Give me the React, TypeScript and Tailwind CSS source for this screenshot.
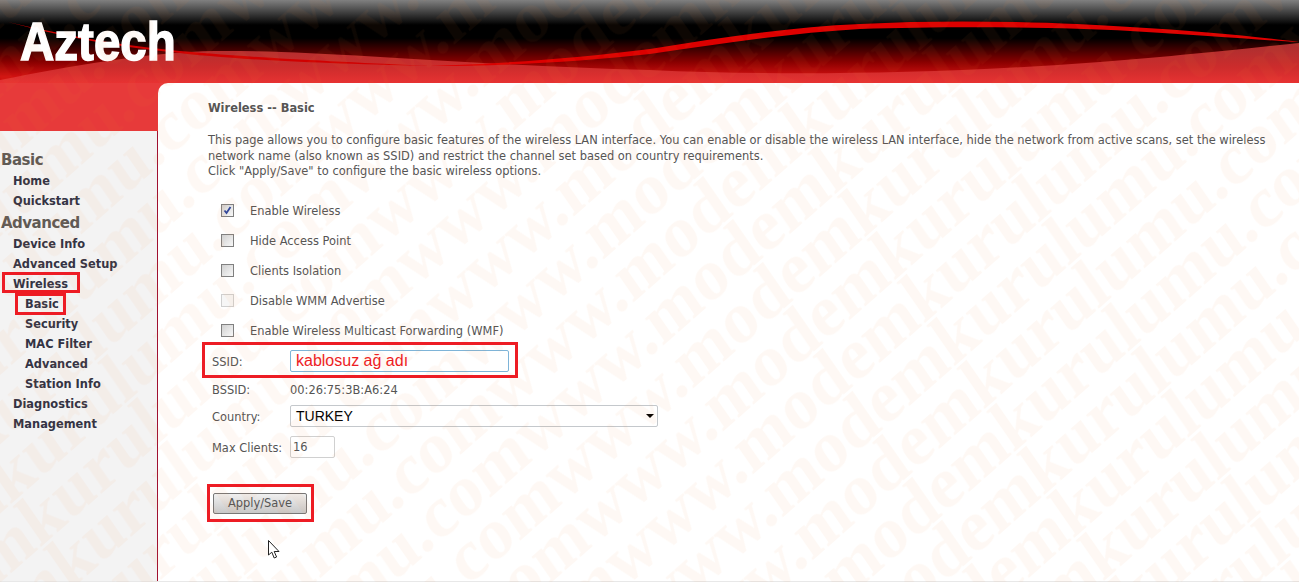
import React from 'react';

const Watermark: React.FC = () => (
  <svg width="1299" height="582" className="absolute inset-0 pointer-events-none">
    <defs>
      <pattern
        id="wm"
        patternUnits="userSpaceOnUse"
        width="860"
        height="52.4"
        patternTransform="matrix(0.75 -0.66 0.57 0.82 773 365) translate(-252 17)"
      >
        <text x="0" y="0" fontFamily="'Liberation Serif', serif" fontWeight="700" fontSize="72" textLength="860" fill="#f08030">www.modemkurulumu.com</text>
        <text x="0" y="52.4" fontFamily="'Liberation Serif', serif" fontWeight="700" fontSize="72" textLength="860" fill="#f08030">www.modemkurulumu.com</text>
      </pattern>
    </defs>
    <rect width="1299" height="582" fill="url(#wm)" opacity="0.055" />
  </svg>
);

const Header: React.FC = () => (
  <div className="relative h-[83px] shrink-0 overflow-hidden bg-[linear-gradient(#808080_0%,#000_30%,#000_46%,#8a0000_75%,#d01010_92%,#d01010_100%)]">
    <svg width="1299" height="83" viewBox="0 0 1299 83" className="absolute inset-0">
      <defs>
        <linearGradient id="band" x1="0" y1="43" x2="0" y2="83" gradientUnits="userSpaceOnUse">
          <stop offset="0" stopColor="#a83030" />
          <stop offset="0.6" stopColor="#cc2c2c" />
          <stop offset="1" stopColor="#e73232" />
        </linearGradient>
      </defs>
      <path d="M0 80 C 70 66 150 52 215 51 C 320 50 480 66 650 70 C 780 76 940 74 1100 62 C 1180 56 1250 48 1299 43 L1299 83 L0 83 Z" fill="url(#band)" />
      <path d="M8 22 C 60 34 110 44 170 50 C 230 56 300 60 430 66 C 300 63 230 59 170 52 C 110 46 60 36 8 22 Z" fill="#d00000" />
      <path d="M430 66 C 500 64 580 58 650 49 C 720 38 790 27 860 24 C 950 19 1060 22 1130 27 C 1200 31 1260 37 1299 42 C 1260 40 1200 35 1130 31 C 1060 27 950 26 860 29 C 790 33 720 44 650 54 C 580 62 500 66 430 66 Z" fill="#dc0000" />
    </svg>
    <span className="absolute left-[20px] top-[10px] font-['Liberation_Sans',sans-serif] font-bold text-[54px] leading-[62px] text-white [-webkit-text-stroke:1.5px_white] scale-x-[0.88] origin-left">Aztech</span>
  </div>
);

const navItems = [
  { label: 'Basic', kind: 'head' },
  { label: 'Home', kind: 'item' },
  { label: 'Quickstart', kind: 'item' },
  { label: 'Advanced', kind: 'head' },
  { label: 'Device Info', kind: 'item' },
  { label: 'Advanced Setup', kind: 'item' },
  { label: 'Wireless', kind: 'item' },
  { label: 'Basic', kind: 'sub' },
  { label: 'Security', kind: 'sub' },
  { label: 'MAC Filter', kind: 'sub' },
  { label: 'Advanced', kind: 'sub' },
  { label: 'Station Info', kind: 'sub' },
  { label: 'Diagnostics', kind: 'item' },
  { label: 'Management', kind: 'item' },
];

const Sidebar: React.FC = () => (
  <div className="w-[158px] shrink-0 flex flex-col">
    <div className="h-[48px] bg-[#e73a3a]" />
    <div className="flex-1 bg-[#f3f3f3] border-r border-[#a01030] pt-[18px] font-['DejaVu_Sans',sans-serif] font-bold">
      {navItems.map((n, i) =>
        n.kind === 'head' ? (
          <div key={i} className="h-[23px] pl-px flex items-center text-[15px] tracking-[-0.5px] text-[#5f5a55]">{n.label}</div>
        ) : (
          <div key={i} className={`h-[20px] flex items-center text-[11.4px] text-[#333344] ${n.kind === 'sub' ? 'pl-[25px]' : 'pl-[13px]'}`}>{n.label}</div>
        )
      )}
    </div>
  </div>
);

const checks = [
  { label: 'Enable Wireless', on: true },
  { label: 'Hide Access Point' },
  { label: 'Clients Isolation' },
  { label: 'Disable WMM Advertise', off: true },
  { label: 'Enable Wireless Multicast Forwarding (WMF)' },
];

const Box: React.FC<{ on?: boolean; off?: boolean }> = ({ on, off }) => (
  <span className={`w-[13px] h-[13px] mb-[3px] border flex items-center justify-center ${off ? 'border-[#d0d0d0] bg-[#f6f6f6]' : 'border-[#808080] bg-gradient-to-br from-[#d0d0d0] to-[#f8f8f8]'}`}>
    {on && (
      <svg width="9" height="9" viewBox="0 0 9 9"><path d="M1.5 4.5 L3.5 7 L7.5 1" stroke="#33479a" strokeWidth="1.8" fill="none" /></svg>
    )}
  </span>
);

const Content: React.FC = () => (
  <div className="flex-1 bg-white rounded-tl-[10px] pl-[50px] pt-[18px] text-[11.44px] text-[#555] font-['DejaVu_Sans',sans-serif]">
    <h1 className="font-bold leading-[15px] text-[#555]">Wireless -- Basic</h1>
    <p className="mt-[17px] leading-[15.6px] w-[1075px]">
      This page allows you to configure basic features of the wireless LAN interface. You can enable or disable the wireless LAN interface, hide the network from active scans, set the wireless network name (also known as SSID) and restrict the channel set based on country requirements.<br />
      Click "Apply/Save" to configure the basic wireless options.
    </p>
    <div className="mt-[17px] pl-[13px]">
      {checks.map((c) => (
        <div key={c.label} className="h-[30px] flex items-center gap-[16px]">
          <Box on={c.on} off={c.off} />
          <span>{c.label}</span>
        </div>
      ))}
    </div>
    <div className="-mt-px pl-[4px] flex flex-col">
      <div className="h-[30px] flex items-center">
        <span className="w-[78px] pt-[3px]">SSID:</span>
        <span className="w-[219px] h-[22px] border border-[#7eb4d8] rounded-[2px] pl-[5px] flex items-center font-['Liberation_Sans',sans-serif] text-[16px] text-[#ed1c24]">kablosuz ağ adı</span>
      </div>
      <div className="h-[25px] pt-[4px] flex items-center">
        <span className="w-[78px]">BSSID:</span>
        <span>00:26:75:3B:A6:24</span>
      </div>
      <div className="h-[30px] flex items-center">
        <span className="w-[78px] pt-[3px]">Country:</span>
        <span className="relative w-[368px] h-[22px] border border-[#c4c8cc] rounded-[2px] pl-[5px] pt-px flex items-center font-['Liberation_Sans',sans-serif] text-[14px] text-black">
          TURKEY
          <span className="absolute right-[3px] top-[8px] w-0 h-0 border-x-[4px] border-x-transparent border-t-[4px] border-t-black" />
        </span>
      </div>
      <div className="h-[32px] flex items-center">
        <span className="w-[78px] pt-[3px]">Max Clients:</span>
        <span className="w-[45px] h-[22px] border border-[#d0d0d0] rounded-[2px] pl-[2px] pt-[2px] flex items-center">16</span>
      </div>
    </div>
    <button className="mt-[30px] ml-[5px] w-[94px] h-[21px] border border-[#777] rounded-[2px] bg-gradient-to-b from-[#f0f0f0] via-[#dcdcdc] to-[#c8c8c8] text-[#555]">Apply/Save</button>
  </div>
);

// red marks drawn over the screenshot
const Marks: React.FC = () => (
  <>
    <div className="absolute left-[2px] top-[272px] w-[78px] h-[21px] border-3 border-[#ed1c24]" />
    <div className="absolute left-[15px] top-[293px] w-[51px] h-[22px] border-3 border-[#ed1c24]" />
    <div className="absolute left-[202px] top-[342px] w-[316px] h-[36px] border-3 border-[#ed1c24]" />
    <div className="absolute left-[207px] top-[484px] w-[107px] h-[38px] border-3 border-[#ed1c24]" />
  </>
);

const App: React.FC = () => (
  <div className="relative w-[1299px] h-[582px] overflow-hidden flex flex-col bg-white">
    <Header />
    <div className="flex flex-1 min-h-0 bg-[#e73a3a]">
      <Sidebar />
      <Content />
    </div>
    <div className="h-px shrink-0 bg-[#e8e8e8]" />
    <Watermark />
    <Marks />
    <svg width="14" height="21" viewBox="0 0 14 21" className="absolute left-[268px] top-[540px]">
      <path d="M0.5 0.5 L0.5 15 L3.8 12.2 L6.2 18 L8.6 17 L6.2 11.5 L11 11.5 Z" fill="#fff" stroke="#222" strokeWidth="1" />
    </svg>
  </div>
);

export default App;
